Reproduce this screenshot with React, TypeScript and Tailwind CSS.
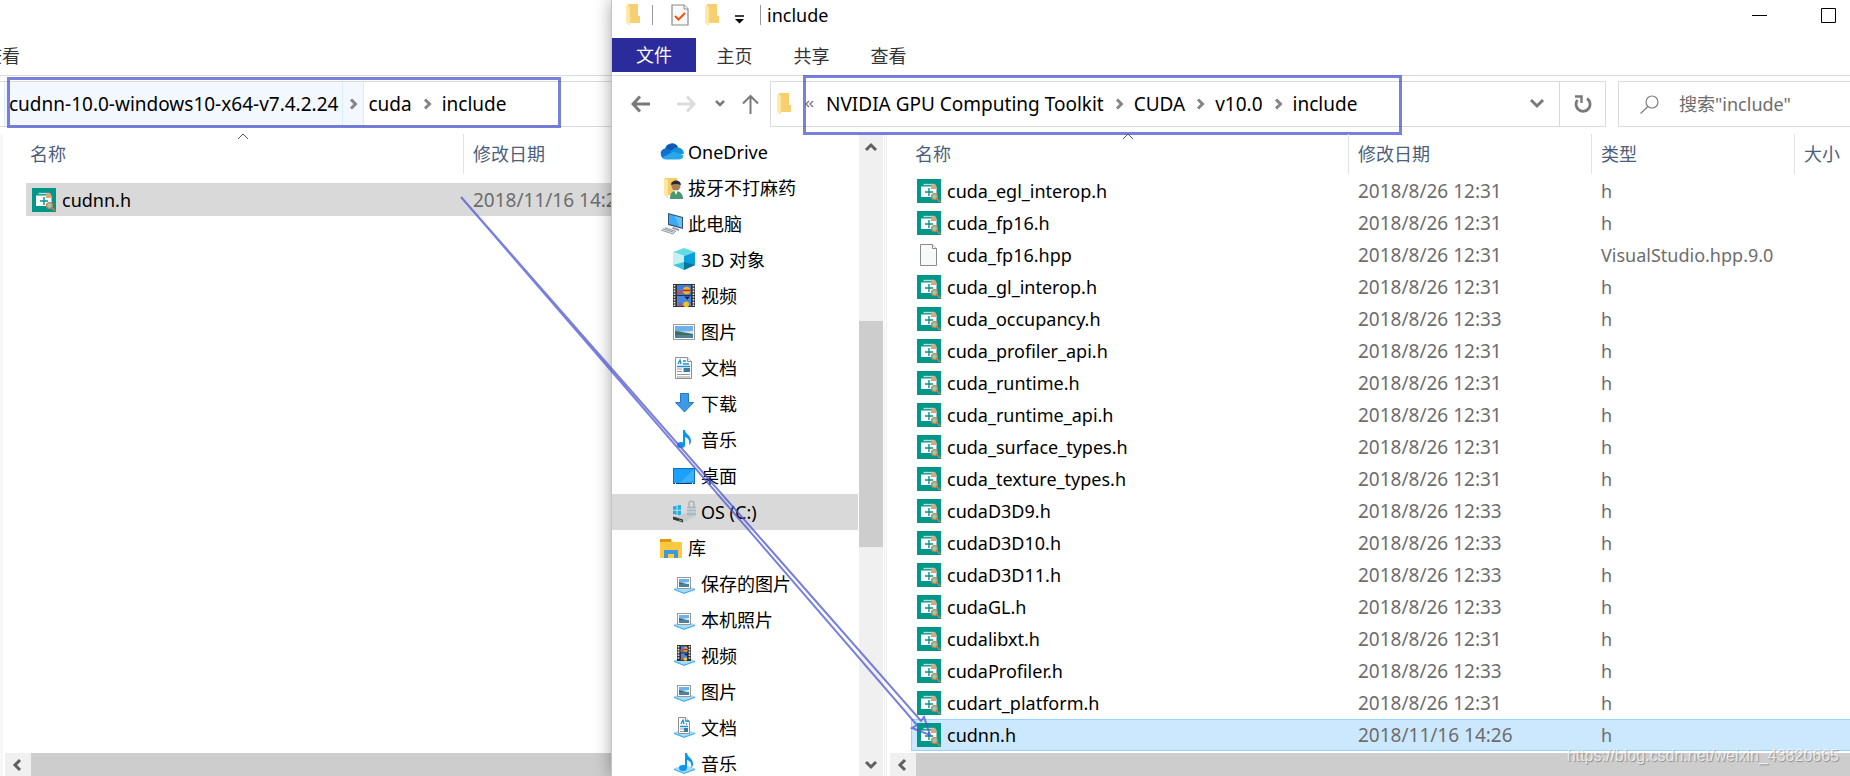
import type { ReactNode } from "react";
import clsx from "clsx";

type FileEntry = { name: string; date: string; type: string; selected?: boolean };

const files: FileEntry[] = [
    { name: "cuda_egl_interop.h", date: "2018/8/26 12:31", type: "h" },
    { name: "cuda_fp16.h", date: "2018/8/26 12:31", type: "h" },
    { name: "cuda_fp16.hpp", date: "2018/8/26 12:31", type: "VisualStudio.hpp.9.0" },
    { name: "cuda_gl_interop.h", date: "2018/8/26 12:31", type: "h" },
    { name: "cuda_occupancy.h", date: "2018/8/26 12:33", type: "h" },
    { name: "cuda_profiler_api.h", date: "2018/8/26 12:31", type: "h" },
    { name: "cuda_runtime.h", date: "2018/8/26 12:31", type: "h" },
    { name: "cuda_runtime_api.h", date: "2018/8/26 12:31", type: "h" },
    { name: "cuda_surface_types.h", date: "2018/8/26 12:31", type: "h" },
    { name: "cuda_texture_types.h", date: "2018/8/26 12:31", type: "h" },
    { name: "cudaD3D9.h", date: "2018/8/26 12:33", type: "h" },
    { name: "cudaD3D10.h", date: "2018/8/26 12:33", type: "h" },
    { name: "cudaD3D11.h", date: "2018/8/26 12:33", type: "h" },
    { name: "cudaGL.h", date: "2018/8/26 12:33", type: "h" },
    { name: "cudalibxt.h", date: "2018/8/26 12:31", type: "h" },
    { name: "cudaProfiler.h", date: "2018/8/26 12:33", type: "h" },
    { name: "cudart_platform.h", date: "2018/8/26 12:31", type: "h" },
    { name: "cudnn.h", date: "2018/11/16 14:26", type: "h", selected: true },
];

/* ---------- small icons ---------- */

function HeaderFileIcon() {
    return (
        <svg width="24" height="24" viewBox="0 0 24 24" className="shrink-0">
            <rect width="24" height="24" fill="#009688" />
            <path d="M6.500 5.500h11" stroke="#b5e0db" strokeWidth="1.4" />
            <path d="M4 7.500h15.500V18H4z" fill="#fff" />
            <path d="M14 5.500h5v2h-5zM14 8h5.500v2h-5.500z" fill="#f59a6c" />
            <path d="M8 13h8M12 9v8" stroke="#009688" strokeWidth="1.4" />
            <circle cx="17.5" cy="17.500" r="3" fill="#8fc9b9" stroke="#d9793f" strokeWidth="1.200" />
            <path d="M19.700 19.700l3.600 3.400" stroke="#d9793f" strokeWidth="1.400" />
        </svg>
    );
}

function BlankFileIcon() {
    return (
        <svg width="24" height="24" viewBox="0 0 24 24" className="shrink-0">
            <path d="M3.5 1.5h12l4 4v17h-16z" fill="#f8f9fa" stroke="#8b8b8b" />
            <path d="M15.5 1.5v4h4" fill="#fff" stroke="#8b8b8b" />
        </svg>
    );
}

function FolderIcon() {
    return (
        <svg width="14" height="22" viewBox="0 0 14 22" className="shrink-0">
            <path d="M2 0h10v12h2v7H2z" fill="#f5cf70" />
            <path d="M0 1l4 2v19l-4-3z" fill="#ffe9a6" />
            <path d="M4 3v16" stroke="#f9dc8c" />
        </svg>
    );
}

function CheckedPageIcon() {
    return (
        <svg width="18" height="22" viewBox="0 0 18 22" className="shrink-0">
            <path d="M1 1h12l4 4v16H1z" fill="#fafafa" stroke="#8b8b8b" strokeWidth="1.2" />
            <path d="M13 1v4h4" fill="#fff" stroke="#8b8b8b" />
            <path d="M4 12l3.5 3.5L14 9" fill="none" stroke="#f0520f" strokeWidth="2" />
        </svg>
    );
}

function Chevron({ dir, thin }: { dir: "up" | "down" | "left" | "right"; thin?: boolean }) {
    const paths = {
        up: "M2 9l5-5 5 5",
        down: "M2 5l5 5 5-5",
        left: "M9 2L4 7l5 5",
        right: "M5 2.500L9.500 7 5 11.500",
    };
    return (
        <svg width="14" height="14" viewBox="0 0 14 14" fill="none" className="shrink-0">
            <path d={paths[dir]} stroke="currentColor" strokeWidth={thin ? 1 : 3} />
        </svg>
    );
}

function Photo({ x, y, w, h }: { x: number; y: number; w: number; h: number }) {
    return (
        <>
            <rect x={x + 0.5} y={y + 0.5} width={w - 1} height={h - 1} fill="#fff" stroke="#999" />
            <rect x={x + 2} y={y + 2} width={w - 4} height={h - 4} fill="#6fb0ee" />
            <path d={`M${x + 2} ${y + h / 2}l${w - 4} -1v3h-${w - 4}z`} fill="#d5ebf7" />
            <path d={`M${x + 2} ${y + h / 2 - 1}q${w / 3} 1 ${w - 4} 3v1h-${w - 4}z`} fill="#3f6f5c" />
            <rect x={x + 2} y={y + h - 5} width={w - 4} height="3" fill="#4f7fa0" />
        </>
    );
}

function Film({ x, y, w, h }: { x: number; y: number; w: number; h: number }) {
    return (
        <>
            <rect x={x} y={y} width={w} height={h} fill="#333" />
            <path
                d={`M${x + 1.5} ${y + 1}v${h - 2}M${x + w - 1.5} ${y + 1}v${h - 2}`}
                stroke="#e8e8e8"
                strokeWidth="1.6"
                strokeDasharray="1.6 1.2"
            />
            <rect x={x + 4} y={y + 1} width={w - 8} height={h / 2 - 1.5} fill="#3f7be0" />
            <rect x={x + 4} y={y + h / 2 + 0.5} width={w - 8} height={h / 2 - 1.5} fill="#4a84e4" />
            <circle cx={x + w * 0.62} cy={y + h * 0.28} r={w * 0.17} fill="#f2b91c" />
            <path d={`M${x + w * 0.45} ${y + h * 0.28}h${w * 0.34}`} stroke="#c5281c" strokeWidth="1.6" />
            <circle cx={x + w * 0.32} cy={y + h * 0.36} r={w * 0.09} fill="#e0492c" />
            <path d={`M${x + w * 0.52} ${y + h * 0.54}h${w * 0.26}l-${w * 0.13} ${h * 0.14}z`} fill="#222" />
            <circle cx={x + w * 0.6} cy={y + h * 0.88} r={w * 0.13} fill="#f2c21c" />
            <circle cx={x + w * 0.34} cy={y + h * 0.9} r={w * 0.08} fill="#d9442a" />
        </>
    );
}

function Page({ x, y, w, h }: { x: number; y: number; w: number; h: number }) {
    return (
        <>
            <path
                d={`M${x + 0.5} ${y + 0.5}h${w - 5}l4 4v${h - 5}h-${w - 1}z`}
                fill="#fff"
                stroke="#8e8e8e"
            />
            <path d={`M${x + w - 4.5} ${y + 0.5}v4h4`} fill="#eee" stroke="#8e8e8e" />
            <path
                d={`M${x + 3} ${y + 7}l2 -4 1 4M${x + 8} ${y + 4}h3M${x + 8} ${y + 7}h${w - 11}M${x + 2} ${y + 9.5}h${w - 4}`}
                fill="none"
                stroke="#1e90d2"
                strokeWidth="1.3"
            />
            <path d={`M${x + 2} ${y + 12}h5M${x + 2} ${y + 14.5}h5`} stroke="#999" />
            <rect x={x + w / 2} y={y + 11} width={w / 2 - 2} height="4" fill="#3a7ca5" />
            {h > 18 && <path d={`M${x + 2} ${y + 17.5}h${w - 4}M${x + 2} ${y + 20}h${w - 4}`} stroke="#999" />}
        </>
    );
}

function Note({ x, y }: { x: number; y: number }) {
    return (
        <g transform={`translate(${x} ${y})`} fill="#0a96f0">
            <ellipse cx="4" cy="15" rx="4" ry="3" />
            <path d="M6 0h2c0 4 6 5 6 11 0 2-1 3-2 4 1-5-1-7-4-8v8H6z" />
        </g>
    );
}

function LibraryBase() {
    return (
        <>
            <path d="M1 16.5l10-4 11 4-11 4z" fill="#a5dcfa" />
            <path d="M1 16.5l10 4 11-4v1.5l-11 4-10-4z" fill="#49b1ee" />
        </>
    );
}

const treeIcons: Record<string, ReactNode> = {
    onedrive: (
        <>
            <path d="M5 9a7 7 0 0 1 13-2l-3 6H5z" fill="#0a5cb8" />
            <path d="M5 8.5a5.5 5.5 0 0 1 5 1.5l8 5-12 4a5.3 5.3 0 0 1-1-10.5z" fill="#1270cc" />
            <path d="M10 12q4-5 8-4.500 5 .5 6 6l-6 2z" fill="#1490df" />
            <path d="M2 17.500l12-6 9 3.500q1 4-4 4.500H5.500Q3 19.500 2 17.500z" fill="#28a8ea" />
        </>
    ),
    user: (
        <>
            <path d="M5 2h12v17H8z" fill="#f3cd6c" />
            <path d="M4 2l4 2v18l-4-3z" fill="#ffe7a0" />
            <path d="M10 23c0-6 2-8 6-8s7 3 7 8z" fill="#4b9673" />
            <path d="M14 14h4l-2 5z" fill="#fff" />
            <circle cx="16" cy="10" r="4.500" fill="#a97f60" />
            <path d="M11 9c0-6 10-6 10 0q-5-2-10 0z" fill="#2c2b2b" />
        </>
    ),
    computer: (
        <>
            <path d="M8 1l15 4v12L8 13z" fill="#34506b" />
            <path d="M9 2.300l13 3.600v9.600L9 12z" fill="#3ba9f3" />
            <path d="M15 3.900l7 2v9.600l-3-.8z" fill="#66bff8" />
            <path d="M13 15l6 2v2l-7-2z" fill="#8a98a5" />
            <path d="M1 17l5-2 11 3-4 3.500z" fill="#dfe4e8" />
            <path d="M3 17l10 3M5 16l10 3M1 18l12 4 3-3" fill="none" stroke="#8f9ba5" />
        </>
    ),
    cube: (
        <>
            <path d="M0 4l11-4 11 4-11 4z" fill="#63dbe6" />
            <path d="M0 4l11 4v14L0 17z" fill="#c6f1f1" />
            <path d="M22 4L11 8v14l11-5z" fill="#0a9fdb" />
            <path d="M0 17l11-3v8z" fill="#3dc8d8" />
            <path d="M22 17l-11-3v8z" fill="#05759b" />
        </>
    ),
    video: <Film x={0} y={0} w={22} h={23} />,
    picture: <Photo x={0} y={4} w={22} h={16} />,
    document: <Page x={2} y={1} w={17} h={22} />,
    download: <path d="M7.500 1.500h8v9h5L11.500 20l-9-9.500h5z" fill="#3d98e8" stroke="#2479c8" />,
    music: <Note x={4} y={2} />,
    desktop: (
        <>
            <rect x=".5" y="4.500" width="21" height="15" fill="#1ba1fb" stroke="#0c72bd" />
            <path d="M21 5v12L7 19z" fill="#3db0ff" />
            <path d="M1 19.500h20" stroke="#123f66" />
            <path d="M2 19.500h1M19 19.500h1" stroke="#fff" />
        </>
    ),
    drive: (
        <>
            <path d="M0 6.500l3.500-.7v4H0zM4.500 5.600L8 5v4.800H4.500zM0 10.700h3.500v4L0 14zM4.500 10.700H8v4.800l-3.500-.7z" fill="#15b3ec" />
            <path d="M0 17l13-4 10 3-12 6-11-3z" fill="#c9ccce" />
            <path d="M0 16.500l10 3v3L0 19.500z" fill="#36393b" />
            <path d="M6 20l3 1" stroke="#4ad060" />
            <path d="M16 7V3.500c0-3 5-3 5 0V7" fill="none" stroke="#a8b3ba" strokeWidth="1.600" />
            <rect x="14" y="6.500" width="9" height="9" rx="1" fill="#a9b9c4" />
            <path d="M14 9h9M14 12h9" stroke="#d8e0e5" />
        </>
    ),
    library: (
        <>
            <path d="M0 3h11l2 3h9v16H0z" fill="#fec93f" />
            <path d="M0 3h11v3H0z" fill="#d99a10" />
            <path d="M4 22v-8h14v8h-4v-4H8v4z" fill="#3d98dc" />
        </>
    ),
    libPicture: (
        <>
            <LibraryBase />
            <Photo x={4} y={5} w={14} h={12} />
        </>
    ),
    libVideo: (
        <>
            <LibraryBase />
            <Film x={4} y={1} w={14} h={16} />
        </>
    ),
    libDocument: (
        <>
            <LibraryBase />
            <Page x={5} y={1} w={12} h={17} />
        </>
    ),
    libMusic: (
        <>
            <LibraryBase />
            <Note x={6} y={1} />
        </>
    ),
};

type TreeItem = { label: string; icon: string; nested?: boolean; selected?: boolean };

const tree: TreeItem[] = [
    { label: "OneDrive", icon: "onedrive" },
    { label: "拔牙不打麻药", icon: "user" },
    { label: "此电脑", icon: "computer" },
    { label: "3D 对象", icon: "cube", nested: true },
    { label: "视频", icon: "video", nested: true },
    { label: "图片", icon: "picture", nested: true },
    { label: "文档", icon: "document", nested: true },
    { label: "下载", icon: "download", nested: true },
    { label: "音乐", icon: "music", nested: true },
    { label: "桌面", icon: "desktop", nested: true },
    { label: "OS (C:)", icon: "drive", nested: true, selected: true },
    { label: "库", icon: "library" },
    { label: "保存的图片", icon: "libPicture", nested: true },
    { label: "本机照片", icon: "libPicture", nested: true },
    { label: "视频", icon: "libVideo", nested: true },
    { label: "图片", icon: "libPicture", nested: true },
    { label: "文档", icon: "libDocument", nested: true },
    { label: "音乐", icon: "libMusic", nested: true },
];

/* ---------- shared pieces ---------- */

function Crumb({ label, active }: { label: string; active?: boolean }) {
    return (
        <button
            className={clsx(
                "h-full shrink-0 px-1 whitespace-nowrap",
                active && "border-l border-[#d9edfb] bg-[#f2f8fe]"
            )}
        >
            {label}
        </button>
    );
}

function CrumbArrow({ active }: { active?: boolean }) {
    return (
        <button
            aria-label="展开"
            className={clsx(
                "flex h-full w-[22px] shrink-0 items-center justify-center text-[#858585]",
                active && "border-x border-[#d9edfb] bg-[#f2f8fe]"
            )}
        >
            <Chevron dir="right" />
        </button>
    );
}

function HorizontalScroll() {
    return (
        <div className="flex h-[23px] shrink-0 bg-[#cdcdcd]">
            <button aria-label="向左滚动" className="flex w-[26px] items-center justify-center bg-[#f0f0f0] text-[#606060]">
                <Chevron dir="left" />
            </button>
        </div>
    );
}

function NameHeading() {
    return (
        <th className="p-0 pb-px font-normal">
            <div className="relative flex h-10 items-center border-r border-[#e2e2e2] pl-1">
                <span>名称</span>
                <span className="absolute inset-x-0 -top-1 flex justify-center pr-1 text-[#555]">
                    <Chevron dir="up" thin />
                </span>
            </div>
        </th>
    );
}

function Heading({ label, last }: { label: string; last?: boolean }) {
    return (
        <th className="p-0 pb-px font-normal">
            <div className={clsx("flex h-10 items-center pl-[9px]", !last && "border-r border-[#e2e2e2]")}>{label}</div>
        </th>
    );
}

/* ---------- windows ---------- */

function SourceWindow() {
    return (
        <section className="flex min-h-0 min-w-0 flex-col overflow-hidden bg-white">
            <div className="flex h-[76px] shrink-0 items-end border-b border-[#dadbdc]">
                <button className="-ml-4 h-[38px] whitespace-nowrap text-[#333]">查看</button>
            </div>
            <div className="relative mt-[5px] flex h-[46px] shrink-0 items-center border-y border-[#d9d9d9] pl-1 text-[19px] text-black">
                <Crumb label="cudnn-10.0-windows10-x64-v7.4.2.24" active />
                <CrumbArrow active />
                <Crumb label="cuda" />
                <CrumbArrow />
                <Crumb label="include" />
                <div className="pointer-events-none absolute -top-[5px] left-[7px] h-[51px] w-[554px] border-3 border-[#4c55d0]/75" />
            </div>
            <div className="mt-[7px] flex min-h-0 flex-1 flex-col border-l-3 border-[#f7f7f7] pl-[2px]">
                <div className="min-h-0 flex-1 overflow-hidden pl-[21px]">
                    <table className="w-[800px] table-fixed text-left">
                        <colgroup>
                            <col className="w-[438px]" />
                            <col />
                        </colgroup>
                        <thead className="text-[#4c607a]">
                            <tr>
                                <NameHeading />
                                <Heading label="修改日期" last />
                            </tr>
                            <tr className="h-2" />
                        </thead>
                        <tbody>
                            <tr className="h-[33px] bg-[#d9d9d9]">
                                <td className="p-0">
                                    <div className="flex items-center gap-[6px] pl-[6px] text-black">
                                        <HeaderFileIcon />
                                        cudnn.h
                                    </div>
                                </td>
                                <td className="p-0 pl-[9px] text-[19px] text-[#6d6d6d]">2018/11/16 14:26</td>
                            </tr>
                        </tbody>
                    </table>
                </div>
                <HorizontalScroll />
            </div>
        </section>
    );
}

function TitleBar() {
    return (
        <header className="flex h-[38px] shrink-0 items-center pb-2 pl-[14px]">
            <FolderIcon />
            <span className="ml-3 h-5 w-px bg-[#999]" />
            <button aria-label="属性" className="ml-[18px]">
                <CheckedPageIcon />
            </button>
            <button aria-label="新建文件夹" className="ml-4">
                <FolderIcon />
            </button>
            <button aria-label="自定义快速访问工具栏" className="ml-4 pt-2">
                <svg width="9" height="9" viewBox="0 0 9 9">
                    <path d="M0 1h9" stroke="#000" strokeWidth="1.500" />
                    <path d="M0 4h9L4.500 8.500z" />
                </svg>
            </button>
            <span className="ml-4 h-5 w-px bg-[#999]" />
            <h1 className="ml-[6px] text-black">include</h1>
            <div className="ml-auto flex gap-[54px] pr-[14px]">
                <button aria-label="最小化">
                    <svg width="15" height="15" viewBox="0 0 15 15">
                        <path d="M0 7.500h15" stroke="#000" />
                    </svg>
                </button>
                <button aria-label="最大化">
                    <svg width="15" height="15" viewBox="0 0 15 15">
                        <path d="M.5.500h14v14H.5z" fill="none" stroke="#000" />
                    </svg>
                </button>
            </div>
        </header>
    );
}

function AddressRow() {
    return (
        <div className="mt-[5px] flex h-[46px] shrink-0 overflow-visible pl-[19px]">
            <div className="flex w-[139px] shrink-0 items-center text-[#7a7a7a]">
                <button aria-label="后退">
                    <svg width="19" height="18" viewBox="0 0 19 18" fill="none" stroke="currentColor" strokeWidth="3">
                        <path d="M19 9H2M9 1.500L2 9l7 7.500" />
                    </svg>
                </button>
                <button aria-label="前进" className="ml-[27px] text-[#dcdcdc]">
                    <svg width="19" height="18" viewBox="0 0 19 18" fill="none" stroke="currentColor" strokeWidth="3">
                        <path d="M0 9h17M10 1.500L17 9l-7 7.500" />
                    </svg>
                </button>
                <button aria-label="最近浏览的位置" className="ml-[19px]">
                    <svg width="10" height="8" viewBox="0 0 10 8" fill="none" stroke="currentColor" strokeWidth="2.500">
                        <path d="M1 1l4 4 4-4" />
                    </svg>
                </button>
                <button aria-label="向上" className="ml-[17px]">
                    <svg width="17" height="20" viewBox="0 0 17 20" fill="none" stroke="currentColor" strokeWidth="2">
                        <path d="M8.500 20V2M1 9.500L8.500 2 16 9.500" />
                    </svg>
                </button>
            </div>
            <div className="relative flex min-w-0 flex-1 items-center border border-[#d9d9d9] pl-[6px] text-[19px] text-black">
                <FolderIcon />
                <button aria-label="更多" className="ml-[14px] h-full w-[17px] text-left text-[#777]">
                    <svg width="9" height="8" viewBox="0 0 9 8" fill="none" stroke="currentColor" strokeWidth="1.400">
                        <path d="M4 1L1 4l3 3M8 1L5 4l3 3" />
                    </svg>
                </button>
                <Crumb label="NVIDIA GPU Computing Toolkit" />
                <CrumbArrow />
                <Crumb label="CUDA" />
                <CrumbArrow />
                <Crumb label="v10.0" />
                <CrumbArrow />
                <Crumb label="include" />
                <button aria-label="以前的位置" className="mr-[14px] ml-auto text-[#7a7a7a]">
                    <svg width="16" height="12" viewBox="0 0 16 12" fill="none" stroke="currentColor" strokeWidth="3">
                        <path d="M2 2l6 6 6-6" />
                    </svg>
                </button>
                <button
                    aria-label="刷新"
                    className="flex h-full w-[46px] shrink-0 items-center justify-center border-l border-[#d9d9d9] text-[#7a7a7a]"
                >
                    <svg width="18" height="18" viewBox="0 0 18 18" fill="none" stroke="currentColor">
                        <path d="M13 3.500A7 7 0 1 1 3.500 5" strokeWidth="2.800" />
                        <path d="M1 1.500h6.500V8" strokeWidth="2.400" />
                    </svg>
                </button>
                <div className="pointer-events-none absolute -top-[7px] left-8 h-[60px] w-[599px] border-3 border-[#4c55d0]/75" />
            </div>
            <label className="ml-3 flex w-[232px] shrink-0 items-center border border-r-0 border-[#d9d9d9] pl-[21px]">
                <svg width="19" height="19" viewBox="0 0 19 19" fill="none" stroke="#808080" strokeWidth="1.200" className="shrink-0">
                    <circle cx="12" cy="7" r="6" />
                    <path d="M8 11.500L.5 18.500" />
                </svg>
                <input
                    type="text"
                    aria-label="搜索"
                    placeholder='搜索"include"'
                    className="ml-5 w-full min-w-0 outline-none placeholder:text-[#6d6d6d]"
                />
            </label>
        </div>
    );
}

function NavigationTree() {
    return (
        <nav className="flex w-[275px] shrink-0 overflow-hidden">
            <ul className="min-w-0 flex-1">
                {tree.map((item, i) => (
                    <li key={i} className={clsx("h-9", item.selected && "bg-[#d9d9d9]")}>
                        <a
                            href="#"
                            className={clsx(
                                "flex h-full items-center gap-1 whitespace-nowrap text-black",
                                item.nested ? "pl-[61px]" : "pl-[48px]"
                            )}
                        >
                            <svg width="24" height="24" viewBox="0 0 24 24" className="shrink-0">
                                {treeIcons[item.icon]}
                            </svg>
                            {item.label}
                        </a>
                    </li>
                ))}
            </ul>
            <div className="ml-px flex w-6 flex-col items-center bg-[#f0f0f0] text-[#606060]">
                <button aria-label="向上滚动" className="flex h-7 items-center">
                    <Chevron dir="up" />
                </button>
                <div className="mt-[159px] h-[226px] w-full bg-[#cdcdcd]" />
                <button aria-label="向下滚动" className="mt-auto flex h-6 items-center">
                    <Chevron dir="down" />
                </button>
            </div>
            <div className="ml-px w-[3px] border-x border-[#f0f0f0]" />
        </nav>
    );
}

function FileList() {
    return (
        <div className="flex min-w-0 flex-1 flex-col pl-[3px]">
            <div className="min-h-0 flex-1 overflow-hidden pl-[21px]">
                <table className="w-full min-w-[940px] table-fixed text-left">
                    <colgroup>
                        <col className="w-[438px]" />
                        <col className="w-[243px]" />
                        <col className="w-[203px]" />
                        <col />
                    </colgroup>
                    <thead className="text-[#4c607a]">
                        <tr>
                            <NameHeading />
                            <Heading label="修改日期" />
                            <Heading label="类型" />
                            <Heading label="大小" last />
                        </tr>
                    </thead>
                    <tbody className="text-[#6d6d6d]">
                        {files.map((file) => (
                            <tr
                                key={file.name}
                                className={clsx(
                                    "h-8",
                                    file.selected && "bg-[#cce8ff] outline-1 -outline-offset-1 outline-[#99d1ff]"
                                )}
                            >
                                <td className="p-0">
                                    <div className="flex items-center gap-[6px] pl-[6px] text-black">
                                        {file.name.endsWith(".h") ? <HeaderFileIcon /> : <BlankFileIcon />}
                                        {file.name}
                                    </div>
                                </td>
                                <td className="p-0 pl-[9px] text-[19px]">{file.date}</td>
                                <td className="p-0 pl-[9px] whitespace-nowrap">{file.type}</td>
                                <td className="p-0" />
                            </tr>
                        ))}
                    </tbody>
                </table>
            </div>
            <HorizontalScroll />
        </div>
    );
}

function TargetWindow() {
    return (
        <section className="relative z-10 flex min-h-0 min-w-0 flex-col border-l border-[#c4c4c4] bg-white shadow-[0_0_16px_rgba(0,0,0,0.35)]">
            <TitleBar />
            <div className="flex h-[38px] shrink-0 border-b border-[#dadbdc] text-[#333]">
                <button className="h-[34px] w-[84px] bg-[#2b2b9b] text-white">文件</button>
                <button className="h-[36px] w-[77px]">主页</button>
                <button className="h-[36px] w-[77px]">共享</button>
                <button className="h-[36px] w-[77px]">查看</button>
            </div>
            <AddressRow />
            <div className="mt-[7px] flex min-h-0 flex-1">
                <NavigationTree />
                <FileList />
            </div>
        </section>
    );
}

export default function App() {
    return (
        <main
            lang="zh-CN"
            className="relative grid h-screen grid-cols-[611fr_1239fr] grid-rows-1 overflow-hidden bg-white font-['Noto_Sans','Noto_Sans_CJK_SC',sans-serif] text-[18px] leading-6"
        >
            <SourceWindow />
            <TargetWindow />

            {/* Arrow from the copied file to its destination */}
            <svg className="pointer-events-none absolute inset-0 z-20 h-full w-full" fill="none">
                <path
                    d="M461 197L921 721l3-4 6 18-18-7 5-3z"
                    stroke="#4c55d0"
                    strokeOpacity=".75"
                    strokeWidth="2"
                />
            </svg>
            <p className="absolute right-[11px] bottom-2 z-20 font-['Liberation_Sans',sans-serif] text-[16px] text-white/70 [text-shadow:1px_1px_1px_rgba(0,0,0,0.3)]">
                https://blog.csdn.net/weixin_43820665
            </p>
        </main>
    );
}
